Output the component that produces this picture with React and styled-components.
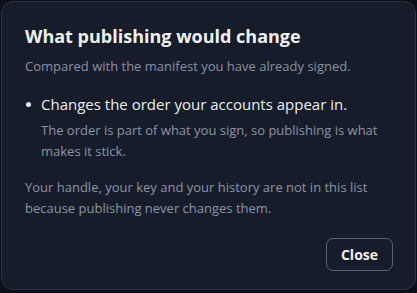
import styled, { createGlobalStyle } from "styled-components";

const GlobalStyle = createGlobalStyle`
    html, body {
        margin: 0;
        padding: 0;
        background: #0b0f17;
    }

    body {
        font-family: "Open Sans", "Noto Sans", sans-serif;
        -webkit-font-smoothing: antialiased;
    }
`;

const changes = [
    {
        title: "Changes the order your accounts appear in.",
        detail: "The order is part of what you sign, so publishing is what makes it stick.",
    },
];

export default function App() {
    return (
        <>
            <GlobalStyle />
            <Page>
                <Dialog role="dialog" aria-labelledby="publish-title">
                    <Title id="publish-title">What publishing would change</Title>
                    <Subtitle>Compared with the manifest you have already signed.</Subtitle>

                    <ChangeList>
                        {changes.map((change) => (
                            <ChangeItem key={change.title}>
                                <Dot />
                                <ChangeBody>
                                    <ChangeTitle>{change.title}</ChangeTitle>
                                    <ChangeDetail>{change.detail}</ChangeDetail>
                                </ChangeBody>
                            </ChangeItem>
                        ))}
                    </ChangeList>

                    <Note>
                        Your handle, your key and your history are not in this list
                        because publishing never changes them.
                    </Note>

                    <Actions>
                        <CloseButton type="button">Close</CloseButton>
                    </Actions>
                </Dialog>
            </Page>
        </>
    );
}

const Page = styled.div`
    width: 417px;
    height: 293px;
    box-sizing: border-box;
    padding: 1px 1px 3px 1px;
    display: flex;
`;

const Dialog = styled.section`
    flex: 1;
    box-sizing: border-box;
    background: #161c2a;
    border: 1px solid #2a3141;
    border-radius: 12px;
    padding: 22px 22px 18px 23px;
    display: flex;
    flex-direction: column;
`;

const Title = styled.h2`
    margin: 0;
    font-size: 18px;
    line-height: 24px;
    font-weight: 700;
    color: #eef0f4;
`;

const Subtitle = styled.p`
    margin: 9px 0 0 0;
    font-size: 13px;
    line-height: 18px;
    color: #8a92a0;
`;

const ChangeList = styled.ul`
    margin: 18px 0 0 0;
    padding: 0;
    list-style: none;
`;

const ChangeItem = styled.li`
    display: flex;
    align-items: flex-start;
    gap: 10px;
`;

const Dot = styled.span`
    flex: none;
    width: 5px;
    height: 5px;
    margin: 9px 0 0 1px;
    border-radius: 50%;
    background: #e6e9ee;
`;

const ChangeBody = styled.div`
    display: flex;
    flex-direction: column;
`;

const ChangeTitle = styled.div`
    font-size: 15px;
    line-height: 22px;
    color: #eceef2;
`;

const ChangeDetail = styled.div`
    margin-top: 5px;
    font-size: 13px;
    line-height: 21px;
    color: #8d95a3;
`;

const Note = styled.p`
    margin: 15px 0 0 0;
    font-size: 13px;
    line-height: 21px;
    color: #8d95a3;
`;

const Actions = styled.div`
    margin-top: auto;
    display: flex;
    justify-content: flex-end;
`;

const CloseButton = styled.button`
    height: 33px;
    width: 67px;
    padding: 0;
    background: transparent;
    border: 1px solid #5b6373;
    border-radius: 7px;
    color: #eef0f4;
    font-family: inherit;
    font-size: 14px;
    font-weight: 700;
    cursor: pointer;
`;
